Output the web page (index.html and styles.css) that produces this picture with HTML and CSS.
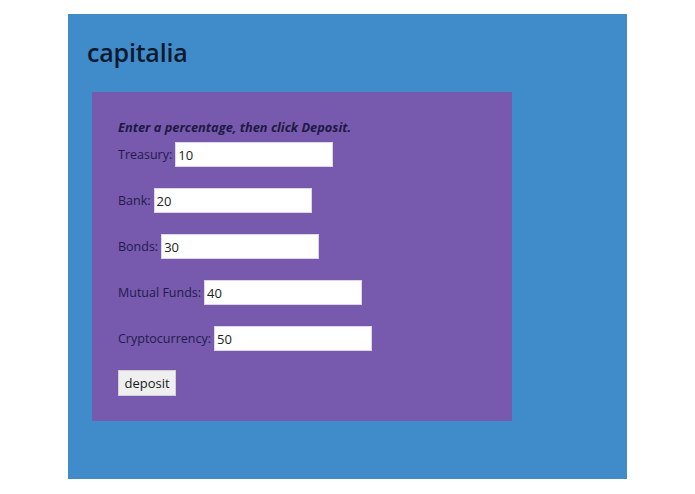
FILE: index.html
```html
<!DOCTYPE html>
<html>
<head>
<meta charset="utf-8">
<link rel="stylesheet" href="styles.css">
</head>
<body>
<div class="app">
  <h1 class="brand">capitalia</h1>
  <div class="panel">
    <p class="hint">Enter a percentage, then click Deposit.</p>
    <label class="row">Treasury: <input class="field" type="text" value="10"></label>
    <label class="row">Bank: <input class="field" type="text" value="20"></label>
    <label class="row">Bonds: <input class="field" type="text" value="30"></label>
    <label class="row">Mutual Funds: <input class="field" type="text" value="40"></label>
    <label class="row">Cryptocurrency: <input class="field" type="text" value="50"></label>
    <div class="actions"><button class="btn" type="button">deposit</button></div>
  </div>
</div>
</body>
</html>
```

FILE: styles.css
```css
html, body {
  margin: 0;
  padding: 0;
  background: #ffffff;
}
body {
  padding-top: 14px;
  font-family: "Open Sans", "Noto Sans", sans-serif;
  color: #1d1a45;
}
.app {
  width: 559px;
  height: 465px;
  margin: 0 auto;
  box-sizing: border-box;
  background: #408bc9;
  padding: 22px 0 0 19px;
  display: flex;
  flex-direction: column;
  align-items: flex-start;
}
.brand {
  margin: 0;
  font-size: 25px;
  line-height: 32px;
  font-weight: 600;
  color: #0d1a2e;
  letter-spacing: -0.2px;
}
.panel {
  margin: 24px 0 0 5px;
  width: 420px;
  height: 329px;
  box-sizing: border-box;
  background: #7759ad;
  padding: 27px 0 0 26px;
  display: flex;
  flex-direction: column;
  align-items: flex-start;
  gap: 21px;
  font-size: 12.5px;
}
.hint {
  margin: 0 0 -14px 0;
  font-size: 12.8px;
  font-weight: 700;
  font-style: italic;
  line-height: 16px;
}
.row {
  display: flex;
  align-items: center;
  gap: 3px;
  color: #221c4c;
}
.field {
  width: 158px;
  height: 25px;
  box-sizing: border-box;
  margin: 0;
  border: 1px solid #dcd6e8;
  background: #ffffff;
  padding: 0 2px;
  font-family: "Open Sans", "Noto Sans", sans-serif;
  font-size: 13px;
  color: #222222;
  outline: none;
}
.actions {
  margin-top: -2px;
}
.btn {
  width: 58px;
  height: 26px;
  margin: 0;
  padding: 0;
  background: #efefef;
  border: 1px solid #d0cfd6;
  font-family: "Open Sans", "Noto Sans", sans-serif;
  font-size: 13px;
  color: #1a1a1a;
}
```
